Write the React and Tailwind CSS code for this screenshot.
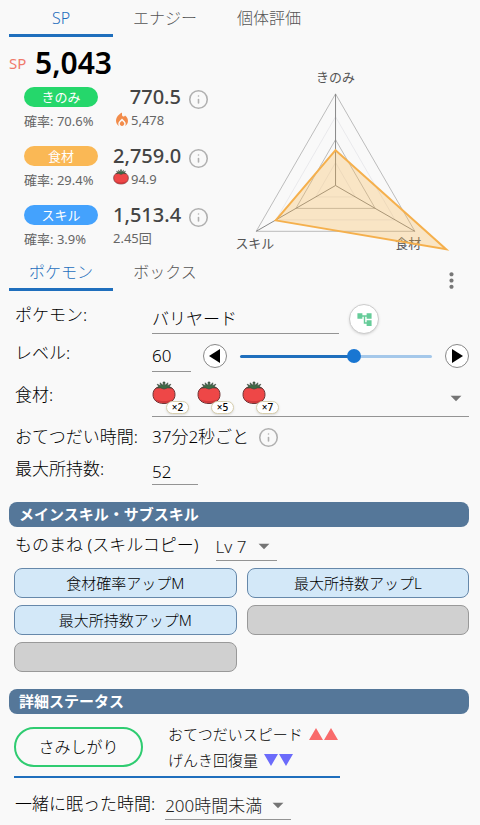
import React, { useState } from 'react'
import clsx from 'clsx'
import { Info } from 'lucide-react'
import {
  MdAccountTree,
  MdArrowDropDown,
  MdLocalFireDepartment,
  MdMoreVert
} from 'react-icons/md'

const stats = [
  { name: 'きのみ', color: 'bg-[#25d76b]', rate: '70.6%', value: '770.5', sub: '5,478', icon: 'fire' },
  { name: '食材', color: 'bg-[#fab855]', rate: '29.4%', value: '2,759.0', sub: '94.9', icon: 'tomato' },
  { name: 'スキル', color: 'bg-[#44a2fd]', rate: '3.9%', value: '1,513.4', sub: '2.45回' }
]

const subSkills = ['食材確率アップM', '最大所持数アップL', '最大所持数アップM', '', '']

const Tomato = ({ className }) => (
  <svg viewBox="0 0 24 24" className={className} aria-hidden="true">
    <path
      d="M12 5.800C6 4.600 1 7.500 1 13.500c0 5.400 4 9 11 9s11-3.600 11-9c0-6-5-8.900-11-7.700z"
      fill="#ee4747"
      stroke="#6b3234"
      strokeWidth="1"
    />
    <path d="M3 18c4 2.800 14 2.800 18 0-1.800 2.700-5 4-9 4s-7.200-1.300-9-4z" fill="#cf383b" />
    <path
      d="M11.300 4.500 11 1h2l-.3 3.500L16 1.800l-.8 2.900 3.700-1.500-1.900 2.600 2.500 1.300-4-.2-3.500 1.200-3.500-1.200-4 .2L7 5.800 5.100 3.200l3.700 1.500L8 1.800z"
      fill="#3d6b45"
      stroke="#37423a"
      strokeWidth=".6"
      strokeLinejoin="round"
    />
  </svg>
)

const Tabs = ({ items, active, onChange }) => (
  <div role="tablist" className="flex">
    {items.map((el, index) => (
      <button
        key={el}
        type="button"
        role="tab"
        aria-selected={active === index}
        onClick={() => onChange(index)}
        className={clsx(
          'w-[104px] h-[37px] pt-0.5 border-b-[3px] text-base leading-5',
          active === index
            ? 'border-[#1f6fbd] text-[#1f6fbd]'
            : 'border-transparent text-[#555555]'
        )}
      >
        {el}
      </button>
    ))}
  </div>
)

const InfoButton = () => (
  <button type="button" aria-label="info" className="p-px text-[#b0b0b0]">
    <Info size={21} strokeWidth={1.8} />
  </button>
)

const StatRow = ({ stat }) => (
  <div className="flex h-[59px]">
    <div className="w-[89px]">
      <div
        className={clsx(
          'w-[74px] h-5 mt-[3px] rounded-full text-center text-[13px] leading-5 font-normal text-white',
          stat.color
        )}
      >
        {stat.name}
      </div>
      <div className="mt-1 text-[13px] leading-5 font-normal text-[#666666] whitespace-nowrap">
        確率: {stat.rate}
      </div>
    </div>
    <div className="w-[68px]">
      <div className="text-xl leading-[26px] font-medium text-right text-[#444444]">{stat.value}</div>
      <div className="flex items-center text-[13px] leading-5 font-normal text-[#666666]">
        {stat.icon === 'fire' && (
          <MdLocalFireDepartment size={18} className="text-[#f28c4b]" />
        )}
        {stat.icon === 'tomato' && <Tomato className="w-4 h-4 mr-0.5 mb-1" />}
        {stat.sub}
      </div>
    </div>
    <div className="pt-1 pl-[6px]">
      <InfoButton />
    </div>
  </div>
)

const ring = (r) =>
  `336,${186 - r} ${336 + r * 0.866},${186 + r * 0.5} ${336 - r * 0.866},${186 + r * 0.5}`

const RadarChart = () => (
  <svg viewBox="220 64 250 190" className="w-full" role="img" aria-label="SP">
    <g fill="none" strokeWidth="1">
      <polygon points={ring(23)} stroke="#e9e9ec" />
      <polygon points={ring(69)} stroke="#e9e9ec" />
      <polygon points={ring(46)} stroke="#bbbbbb" />
      <polygon points={ring(92)} stroke="#bbbbbb" />
      <path d="M336 94V186L256.300 232M336 186L415.700 232" stroke="#888888" />
    </g>
    <g fontSize="13" fontWeight="400" fill="#555555" textAnchor="middle">
      <text x="336" y="82">きのみ</text>
      <text x="255" y="249">スキル</text>
      <text x="409" y="249">食材</text>
    </g>
    <polygon
      points="336,150.500 447,250 276,221"
      fill="#f8b64c"
      fillOpacity=".3"
      stroke="#f5b04d"
      strokeWidth="2"
    />
  </svg>
)

const Row = ({ label, htmlFor, height, children }) => (
  <div className={clsx('flex items-center', height)}>
    <label htmlFor={htmlFor} className="w-[137px] shrink-0 pb-1 whitespace-nowrap">
      {label}
    </label>
    <div className="flex flex-1 items-center h-full">{children}</div>
  </div>
)

const Field = ({ className, ...props }) => (
  <input
    {...props}
    className={clsx(
      'h-full pt-0.5 border-b border-[#949494] bg-transparent outline-none leading-6',
      className
    )}
  />
)

const Select = ({ label, value, className, id }) => (
  <div className={clsx('relative h-7 border-b border-[#949494] text-[#222222]', className)}>
    <select
      id={id}
      aria-label={label}
      defaultValue={value}
      className="w-full h-full appearance-none bg-transparent outline-none leading-6"
    >
      <option>{value}</option>
    </select>
    <MdArrowDropDown
      size={26}
      className="absolute right-0 top-0 text-[#757575] pointer-events-none"
    />
  </div>
)

const Section = ({ children }) => (
  <h2 className="h-[25px] pl-[10px] rounded-lg bg-[#557799] text-[15px] leading-6 font-bold text-white">
    {children}
  </h2>
)

const StepButton = ({ label, points, onClick }) => (
  <button
    type="button"
    aria-label={label}
    onClick={onClick}
    className="flex items-center justify-center w-6 h-6 shrink-0 rounded-full border border-[#888888] bg-white"
  >
    <svg viewBox="0 0 12 14" className="w-3 h-[14px]">
      <polygon points={points} fill="#000" />
    </svg>
  </button>
)

const App = () => {
  const [tab, setTab] = useState(0)
  const [boxTab, setBoxTab] = useState(0)
  const [level, setLevel] = useState(60)

  return (
    <div
      lang="ja"
      className="min-h-screen pl-[9px] pr-[11px] pb-1 bg-[#f9f9f9] text-black text-[17px] leading-6 font-light font-['Noto_Sans','Noto_Sans_CJK_JP',sans-serif]"
    >
      <Tabs items={['SP', 'エナジー', '個体評価']} active={tab} onChange={setTab} />
      <div className="flex">
        <div className="w-[211px] shrink-0">
          <div className="flex items-center h-[47px] pt-1">
            <span className="w-[26px] text-[15px] font-normal text-[#f0796b]">SP</span>
            <span className="text-[30px] font-semibold">5,043</span>
          </div>
          <div className="pl-[15px]">
            {stats.map((el) => (
              <StatRow key={el.name} stat={el} />
            ))}
          </div>
        </div>
        <div className="flex-1 pt-[27px]">
          <RadarChart />
        </div>
      </div>

      <div className="flex items-start justify-between -mt-[7px]">
        <Tabs items={['ポケモン', 'ボックス']} active={boxTab} onChange={setBoxTab} />
        <button type="button" aria-label="menu" className="pt-[14px] pr-[5px] text-[#777777]">
          <MdMoreVert size={25} />
        </button>
      </div>

      <div className="flex flex-col gap-1 pt-[7px] pl-[6px]">
        <Row label="ポケモン:" htmlFor="pokemon" height="h-[34px]">
          <Field id="pokemon" defaultValue="バリヤード" className="w-[187px]" />
          <button
            type="button"
            aria-label="evolution"
            className="flex items-center justify-center w-[30px] h-[30px] ml-[10px] mt-1 rounded-full border border-[#cccccc] bg-white shadow"
          >
            <MdAccountTree size={17} className="text-[#66cc99]" />
          </button>
        </Row>
        <Row label="レベル:" htmlFor="level" height="h-[34px]">
          <Field
            id="level"
            value={level}
            onChange={(e) => setLevel(Number(e.target.value) || 0)}
            className="w-[39px]"
          />
          <div className="flex flex-1 items-center gap-[13px] pl-3 pt-0.5">
            <StepButton
              label="level down"
              points="0,7 11,0 11,14"
              onClick={() => setLevel(level - 1)}
            />
            <input
              type="range"
              aria-label="レベル"
              min={0}
              max={100}
              value={level}
              onChange={(e) => setLevel(Number(e.target.value))}
              style={{
                backgroundImage: `linear-gradient(to right, #1f6fbd ${level}%, #a5c8ea ${level}%)`
              }}
              className="flex-1 min-w-0 h-[3px] appearance-none rounded-full [&::-webkit-slider-thumb]:appearance-none [&::-webkit-slider-thumb]:w-[14px] [&::-webkit-slider-thumb]:h-[14px] [&::-webkit-slider-thumb]:rounded-full [&::-webkit-slider-thumb]:bg-[#1976d2]"
            />
            <StepButton
              label="level up"
              points="1,0 12,7 1,14"
              onClick={() => setLevel(level + 1)}
            />
          </div>
        </Row>
        <Row label="食材:" htmlFor="ingredient" height="h-[41px]">
          <button
            id="ingredient"
            type="button"
            aria-haspopup="listbox"
            className="flex flex-1 items-center h-full border-b border-[#949494]"
          >
            {[2, 5, 7].map((el) => (
              <span key={el} className="relative w-[45px] h-[30px]">
                <Tomato className="w-6 h-6" />
                <span className="absolute left-[14px] top-5 w-[23px] h-[13px] rounded-full border border-[#d8cfae] bg-white shadow text-[10px] leading-[11px] font-medium text-center">
                  ×{el}
                </span>
              </span>
            ))}
            <MdArrowDropDown size={26} className="ml-auto mt-1 text-[#757575]" />
          </button>
        </Row>
        <div className="flex items-center h-8">
          <span className="w-[137px] whitespace-nowrap">おてつだい時間:</span>
          <span className="mr-2">37分2秒ごと</span>
          <InfoButton />
        </div>
        <Row label="最大所持数:" htmlFor="carry" height="h-7">
          <Field id="carry" defaultValue="52" className="w-[46px]" />
        </Row>
      </div>

      <div className="pt-[17px]">
        <Section>メインスキル・サブスキル</Section>
        <div className="flex items-center pl-[6px] pt-[6px] gap-[17px]">
          <span className="pb-1">ものまね (スキルコピー)</span>
          <Select label="スキルレベル" value="Lv 7" className="w-[61px]" />
        </div>
        <div className="grid grid-cols-2 gap-x-[10px] gap-y-[7px] pl-[5px] pt-[7px]">
          {subSkills.map((el, index) => (
            <button
              key={index}
              type="button"
              aria-label={el || 'empty'}
              className={clsx(
                'h-[30px] rounded-lg border text-[15px] leading-6',
                el ? 'border-[#6688aa] bg-[#d3e8f8]' : 'border-[#999999] bg-[#d0d0d0]'
              )}
            >
              {el}
            </button>
          ))}
        </div>
      </div>

      <div className="pt-[17px]">
        <Section>詳細ステータス</Section>
        <div className="flex items-center w-[326px] h-[64px] ml-[5px] border-b-2 border-[#1f6fbd]">
          <button
            type="button"
            className="w-[129px] h-10 mt-1 rounded-full border-2 border-[#2fcc71] text-base"
          >
            さみしがり
          </button>
          <div className="pl-[25px] pt-1 text-[15px] leading-[26px] whitespace-nowrap">
            <div className="flex items-center gap-[6px]">
              おてつだいスピード
              <svg viewBox="0 0 29 12" className="w-[29px] h-3">
                <path d="M0 12 7 0l7 12zM15 12 22 0l7 12z" fill="#f96b6b" />
              </svg>
            </div>
            <div className="flex items-center gap-[6px]">
              げんき回復量
              <svg viewBox="0 0 29 12" className="w-[29px] h-3">
                <path d="M0 0 7 12l7-12zM15 0 22 12l7-12z" fill="#6b6bfb" />
              </svg>
            </div>
          </div>
        </div>
        <div className="flex items-center pl-[6px] pt-[14px] gap-[10px]">
          <label htmlFor="sleep" className="pb-1">一緒に眠った時間:</label>
          <Select id="sleep" value="200時間未満" className="w-[126px]" />
        </div>
      </div>
    </div>
  )
}

export default App
